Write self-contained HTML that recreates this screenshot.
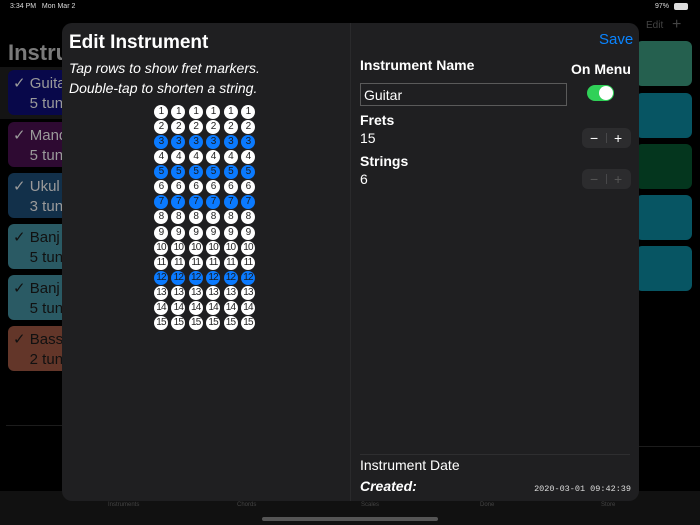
<!DOCTYPE html>
<html><head><meta charset="utf-8"><style>
*{margin:0;padding:0;box-sizing:border-box}
body{width:700px;height:525px;background:#000;position:relative;overflow:hidden;font-family:"Liberation Sans",sans-serif;color:#fff}
.abs{position:absolute;white-space:nowrap}
.card{position:absolute;border-radius:6px;overflow:hidden;white-space:nowrap}
.lc{left:8px;width:60px;height:45px;color:#9a9a9a;font-size:15px;padding:4px 0 0 5px;line-height:20px}
.rc{left:636px;width:56px;height:45px}
.hr{position:absolute;height:1px;background:#1c1c1c}
.modal{position:absolute;left:62px;top:23px;width:577px;height:478px;background:#1f1f21;border-radius:10px;overflow:hidden}
.grid{position:absolute;left:154px;top:105px;display:grid;grid-template-columns:repeat(6,17.4px);grid-template-rows:repeat(15,15.07px)}
.grid span{width:14px;height:14px;border-radius:50%;background:#fff;color:#222;font-size:10px;line-height:14px;text-align:center;letter-spacing:-0.8px}
.grid span.b{background:#0a7aff;color:#1a1a1a}
.step{position:absolute;left:582px;width:49px;height:20px;background:#2c2c2e;border-radius:6px}
.step i{position:absolute;top:2px;font-style:normal;font-size:14px;line-height:16px}
.step b{position:absolute;left:24px;top:5px;width:1px;height:10px;background:#48484a}
</style></head><body>
<div class="abs" style="left:10px;top:3px;font-size:7px;color:#ddd">3:34 PM &nbsp; Mon Mar 2</div>
<div class="abs" style="left:655px;top:3px;font-size:7px;color:#ddd">97%</div>
<div class="abs" style="left:674px;top:3px;width:14px;height:7px;border:1px solid #ddd;border-radius:2px;background:#ddd"></div>
<div class="abs" style="left:646px;top:20px;font-size:10px;color:#444">Edit</div>
<div class="abs" style="left:672px;top:16px;font-size:16px;color:#444">+</div>
<div class="abs" style="left:8px;top:40px;font-size:22px;font-weight:bold;color:#7a7a7a">Instru</div>
<div class="abs" style="left:0;top:67px;width:62px;height:52px;background:#141414"></div>
<div class="card lc" style="top:70px;background:#08084a">✓ Guita<br>&nbsp;&nbsp;&nbsp;&nbsp;5 tun</div>
<div class="card lc" style="top:122px;background:#2e0a32">✓ Mand<br>&nbsp;&nbsp;&nbsp;&nbsp;5 tun</div>
<div class="card lc" style="top:173px;background:#12304a">✓ Ukul<br>&nbsp;&nbsp;&nbsp;&nbsp;3 tun</div>
<div class="card lc" style="top:224px;background:#2a5a64;color:#111">✓ Banj<br>&nbsp;&nbsp;&nbsp;&nbsp;5 tun</div>
<div class="card lc" style="top:275px;background:#2a5a64;color:#111">✓ Banj<br>&nbsp;&nbsp;&nbsp;&nbsp;5 tun</div>
<div class="card lc" style="top:326px;background:#633629;color:#111">✓ Bass<br>&nbsp;&nbsp;&nbsp;&nbsp;2 tun</div>
<div class="hr" style="left:6px;top:425px;width:60px"></div>
<div class="card rc" style="top:41px;background:#25604f"></div>
<div class="card rc" style="top:93px;background:#075563"></div>
<div class="card rc" style="top:144px;background:#04361e"></div>
<div class="card rc" style="top:195px;background:#075563"></div>
<div class="card rc" style="top:246px;background:#075563"></div>
<div class="hr" style="left:636px;top:446px;width:64px"></div>
<div class="abs" style="left:0;top:491px;width:700px;height:34px;background:#111"></div>
<div class="abs" style="left:262px;top:517px;width:176px;height:4px;border-radius:2px;background:#555"></div>
<div class="abs" style="left:108px;top:502px;font-size:6px;color:#444">Instruments</div>
<div class="abs" style="left:237px;top:502px;font-size:6px;color:#444">Chords</div>
<div class="abs" style="left:361px;top:502px;font-size:6px;color:#444">Scales</div>
<div class="abs" style="left:480px;top:502px;font-size:6px;color:#444">Done</div>
<div class="abs" style="left:601px;top:502px;font-size:6px;color:#444">Store</div>

<div class="modal">
<div class="abs" style="left:288px;top:0;width:1px;height:478px;background:#2a2a2c"></div>
<div class="abs" style="left:7px;top:9px;font-size:19px;font-weight:bold">Edit Instrument</div>
<div class="abs" style="left:7px;top:35px;font-size:14px;font-style:italic;line-height:20px">Tap rows to show fret markers.<br>Double-tap to shorten a string.</div>
<div class="abs" style="left:537px;top:8px;font-size:15px;color:#0a84ff">Save</div>
<div class="abs" style="left:298px;top:34px;font-size:14px;font-weight:bold">Instrument Name</div>
<div class="abs" style="left:509px;top:38px;font-size:14px;font-weight:bold">On Menu</div>
<div class="abs" style="left:298px;top:60px;width:207px;height:23px;border:1px solid #5a5a5a;font-size:14px;padding:3px 0 0 3px">Guitar</div>
<div class="abs" style="left:525px;top:62px;width:27px;height:16px;border-radius:8px;background:#30d158"><div class="abs" style="left:12px;top:1px;width:14px;height:14px;border-radius:50%;background:#fff"></div></div>
<div class="abs" style="left:298px;top:89px;font-size:14px;font-weight:bold">Frets</div>
<div class="abs" style="left:298px;top:107px;font-size:14px">15</div>
<div class="abs" style="left:298px;top:130px;font-size:14px;font-weight:bold">Strings</div>
<div class="abs" style="left:298px;top:148px;font-size:14px">6</div>
<div class="abs" style="left:298px;top:431px;width:270px;height:1px;background:#2e2e30"></div>
<div class="abs" style="left:298px;top:434px;font-size:14px">Instrument Date</div>
<div class="abs" style="left:298px;top:455px;font-size:14px;font-weight:bold;font-style:italic">Created:</div>
<div class="abs" style="right:8px;top:461px;font-size:8.5px;font-family:'Liberation Mono',monospace;color:#ddd">2020-03-01 09:42:39</div>
</div>
<div class="step" style="top:128px"><i style="left:8px">−</i><b></b><i style="left:32px">+</i></div>
<div class="step" style="top:169px;color:#555"><i style="left:8px">−</i><b></b><i style="left:32px">+</i></div>

<div class="grid">
<span>1</span><span>1</span><span>1</span><span>1</span><span>1</span><span>1</span>
<span>2</span><span>2</span><span>2</span><span>2</span><span>2</span><span>2</span>
<span class="b">3</span><span class="b">3</span><span class="b">3</span><span class="b">3</span><span class="b">3</span><span class="b">3</span>
<span>4</span><span>4</span><span>4</span><span>4</span><span>4</span><span>4</span>
<span class="b">5</span><span class="b">5</span><span class="b">5</span><span class="b">5</span><span class="b">5</span><span class="b">5</span>
<span>6</span><span>6</span><span>6</span><span>6</span><span>6</span><span>6</span>
<span class="b">7</span><span class="b">7</span><span class="b">7</span><span class="b">7</span><span class="b">7</span><span class="b">7</span>
<span>8</span><span>8</span><span>8</span><span>8</span><span>8</span><span>8</span>
<span>9</span><span>9</span><span>9</span><span>9</span><span>9</span><span>9</span>
<span>10</span><span>10</span><span>10</span><span>10</span><span>10</span><span>10</span>
<span>11</span><span>11</span><span>11</span><span>11</span><span>11</span><span>11</span>
<span class="b">12</span><span class="b">12</span><span class="b">12</span><span class="b">12</span><span class="b">12</span><span class="b">12</span>
<span>13</span><span>13</span><span>13</span><span>13</span><span>13</span><span>13</span>
<span>14</span><span>14</span><span>14</span><span>14</span><span>14</span><span>14</span>
<span>15</span><span>15</span><span>15</span><span>15</span><span>15</span><span>15</span>
</div>
</body></html>
